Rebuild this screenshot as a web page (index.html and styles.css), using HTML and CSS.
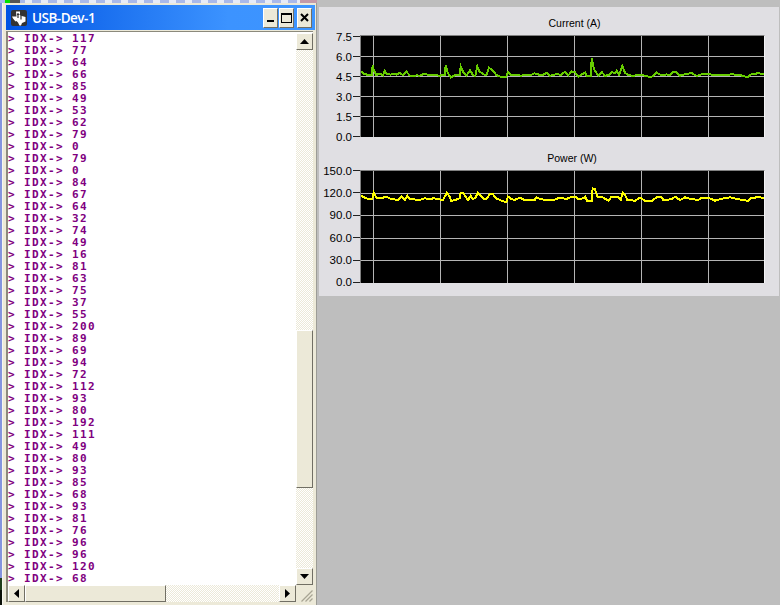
FILE: index.html
```html
<!DOCTYPE html>
<html lang="en">
<head>
<meta charset="utf-8">
<title>USB-Dev-1</title>
<link rel="stylesheet" href="styles.css">
</head>
<body>
<div class="desktop">
  <section class="left">
    <div class="strip"></div>
    <div class="window">
      <header class="titlebar">
        <svg class="logo" viewBox="0 0 16 16" aria-hidden="true">
          <rect width="16" height="16" rx="2" fill="#333"/>
          <path d="M5 1.500h4v4l5.500 1.500v4.500l-3.500 1.500-1 2.500h-1.500l-1.500-3-1.500-1.500-1 .5-2.500-3-1-2h4.500z" fill="#fff"/>
          <path d="M7 3v5M6 4.500h2.500M10 3v1M10 5.500v4" stroke="#333" stroke-width="1.200" fill="none"/>
        </svg>
        <span class="title">USB-Dev-1</span>
        <div class="controls">
          <button class="ctl ctl-min"><i></i></button>
          <button class="ctl ctl-max"><i></i></button>
          <button class="ctl ctl-close">
            <svg viewBox="0 0 9 9" width="9" height="9" aria-hidden="true"><path d="M1 1l7 7M8 1l-7 7" stroke="#000" stroke-width="2"/></svg>
          </button>
        </div>
      </header>
      <div class="client">
        <div class="upper">
          <div class="log">
            <div>&gt; IDX-&gt; 117</div>
            <div>&gt; IDX-&gt; 77</div>
            <div>&gt; IDX-&gt; 64</div>
            <div>&gt; IDX-&gt; 66</div>
            <div>&gt; IDX-&gt; 85</div>
            <div>&gt; IDX-&gt; 49</div>
            <div>&gt; IDX-&gt; 53</div>
            <div>&gt; IDX-&gt; 62</div>
            <div>&gt; IDX-&gt; 79</div>
            <div>&gt; IDX-&gt; 0</div>
            <div>&gt; IDX-&gt; 79</div>
            <div>&gt; IDX-&gt; 0</div>
            <div>&gt; IDX-&gt; 84</div>
            <div>&gt; IDX-&gt; 67</div>
            <div>&gt; IDX-&gt; 64</div>
            <div>&gt; IDX-&gt; 32</div>
            <div>&gt; IDX-&gt; 74</div>
            <div>&gt; IDX-&gt; 49</div>
            <div>&gt; IDX-&gt; 16</div>
            <div>&gt; IDX-&gt; 81</div>
            <div>&gt; IDX-&gt; 63</div>
            <div>&gt; IDX-&gt; 75</div>
            <div>&gt; IDX-&gt; 37</div>
            <div>&gt; IDX-&gt; 55</div>
            <div>&gt; IDX-&gt; 200</div>
            <div>&gt; IDX-&gt; 89</div>
            <div>&gt; IDX-&gt; 69</div>
            <div>&gt; IDX-&gt; 94</div>
            <div>&gt; IDX-&gt; 72</div>
            <div>&gt; IDX-&gt; 112</div>
            <div>&gt; IDX-&gt; 93</div>
            <div>&gt; IDX-&gt; 80</div>
            <div>&gt; IDX-&gt; 192</div>
            <div>&gt; IDX-&gt; 111</div>
            <div>&gt; IDX-&gt; 49</div>
            <div>&gt; IDX-&gt; 80</div>
            <div>&gt; IDX-&gt; 93</div>
            <div>&gt; IDX-&gt; 85</div>
            <div>&gt; IDX-&gt; 68</div>
            <div>&gt; IDX-&gt; 93</div>
            <div>&gt; IDX-&gt; 81</div>
            <div>&gt; IDX-&gt; 76</div>
            <div>&gt; IDX-&gt; 96</div>
            <div>&gt; IDX-&gt; 96</div>
            <div>&gt; IDX-&gt; 120</div>
            <div>&gt; IDX-&gt; 68</div>
          </div>
          <div class="vscroll">
            <div class="sbtn"><i class="arrow arrow-up"></i></div>
            <div class="vtrack"><div class="vthumb"></div></div>
            <div class="sbtn"><i class="arrow arrow-down"></i></div>
          </div>
        </div>
        <div class="hscroll">
          <div class="sbtn sbtn-h"><i class="arrow arrow-left"></i></div>
          <div class="htrack"><div class="hthumb"></div></div>
          <div class="sbtn sbtn-h"><i class="arrow arrow-right"></i></div>
          <svg class="grip" viewBox="0 0 17 17" aria-hidden="true">
            <path d="M5.500 16.500l11-11M9.500 16.500l7-7M13.500 16.500l3-3" stroke="#a8a594" stroke-width="1.300" fill="none"/>
          </svg>
        </div>
      </div>
    </div>
  </section>

  <main class="workspace">
    <div class="panel">
      <div class="chart">
        <h2 class="chart-title chart-title-current">Current (A)</h2>
        <div class="chart-body chart-body-current">
          <div class="axis axis-current">
            <div class="tick"><span>7.5</span></div>
            <div class="tick"><span>6.0</span></div>
            <div class="tick"><span>4.5</span></div>
            <div class="tick"><span>3.0</span></div>
            <div class="tick"><span>1.5</span></div>
            <div class="tick"><span>0.0</span></div>
          </div>
          <svg class="plot" viewBox="361 36 403 101" preserveAspectRatio="none" aria-hidden="true">
            <g class="grid">
              <path d="M361 56.500H764M361 76.500H764M361 96.500H764M361 116.500H764"/>
              <path d="M373.500 36V137M440.500 36V137M507.500 36V137M574.500 36V137M641.500 36V137M708.500 36V137"/>
            </g>
            <polyline class="trace trace-current" transform="translate(318 0) scale(.33333)" points="130,212 134,219 140,222 150,225 162,225 164,196 168,212 175,225 185,221 195,226 200,212 207,222 218,224 225,221 235,224 245,218 255,226 265,215 275,226 285,229 295,226 305,227 320,221 330,225 340,224 352,226 365,227 380,224 383,197 390,220 398,232 410,226 425,226 428,199 435,215 445,227 456,211 465,225 472,228 478,199 485,215 495,222 505,226 513,203 525,212 535,225 550,231 565,230 570,217 580,226 595,224 608,227 620,225 635,226 650,220 666,225"/>
            <polyline class="trace trace-current" transform="translate(540 0) scale(.33333)" points="0,226 10,224 20,218 30,227 40,225 50,222 62,225 75,215 85,226 95,214 105,217 115,230 125,223 135,218 140,228 153,228 155,175 160,200 165,213 175,227 185,216 195,227 205,226 215,216 225,220 230,212 237,225 247,198 255,218 265,226 280,227 300,225 315,227 333,232 350,218 365,226 380,223 390,226 400,215 410,217 420,227 435,223 455,219 470,228 485,223 500,222 525,225 550,225 575,223 600,225 622,232 635,222 655,220 672,222"/>
          </svg>
        </div>
      </div>
      <div class="chart">
        <h2 class="chart-title chart-title-power">Power (W)</h2>
        <div class="chart-body chart-body-power">
          <div class="axis axis-power">
            <div class="tick"><span>150.0</span></div>
            <div class="tick"><span>120.0</span></div>
            <div class="tick"><span>90.0</span></div>
            <div class="tick"><span>60.0</span></div>
            <div class="tick"><span>30.0</span></div>
            <div class="tick"><span>0.0</span></div>
          </div>
          <svg class="plot" viewBox="361 171 403 112" preserveAspectRatio="none" aria-hidden="true">
            <g class="grid">
              <path d="M361 193.500H764M361 215.500H764M361 238.500H764M361 260.500H764"/>
              <path d="M373.500 171V283M440.500 171V283M507.500 171V283M574.500 171V283M641.500 171V283M708.500 171V283"/>
            </g>
            <polyline class="trace trace-power" transform="translate(318 145) scale(.33333)" points="130,152 140,158 150,162 163,162 167,143 175,158 195,158 205,155 220,162 240,165 250,155 260,165 268,152 275,162 305,165 320,160 340,163 345,158 355,162 375,165 387,143 395,155 400,168 412,165 425,160 428,143 435,143 445,158 450,165 458,153 465,162 472,158 480,143 495,160 505,163 515,148 525,148 535,160 550,167 565,172 570,155 580,162 590,165 605,158 620,165 650,165 655,157 666,162"/>
            <polyline class="trace trace-power" transform="translate(540 145) scale(.33333)" points="0,162 20,165 40,165 60,158 80,162 95,155 105,155 115,162 130,160 135,155 142,168 155,168 158,130 165,132 172,155 185,155 205,167 215,155 235,157 242,165 248,143 255,150 262,165 285,167 300,158 315,167 335,168 350,157 365,157 370,165 395,163 405,155 420,165 435,157 445,160 475,165 485,158 505,158 525,167 550,160 570,157 590,162 610,165 625,168 635,158 660,157 672,160"/>
          </svg>
        </div>
      </div>
    </div>
  </main>
</div>
</body>
</html>
```
FILE: styles.css
```css
* {
  box-sizing: border-box;
}

html,
body {
  margin: 0;
  padding: 0;
  height: 100%;
  overflow: hidden;
}

.desktop {
  display: flex;
  width: 780px;
  height: 605px;
  background: #bebebe;
  font-family: "Liberation Sans", Arial, sans-serif;
}

/* Left side: the terminal window on the desktop */
.left {
  width: 317px;
  flex: none;
  display: flex;
  flex-direction: column;
  background: linear-gradient(#8494de 0 578px, #1f3d1a 578px 590px, #0a0f08 590px);
}

.strip {
  height: 3px;
  flex: none;
  background:
    linear-gradient(90deg, transparent 5px, #00e000 5px 10px, #555 10px 20px, transparent 20px 300px, #c49aa8 300px),
    repeating-linear-gradient(90deg, #a9b9ea 0 9px, #e6ebf8 9px 16px);
}

.window {
  flex: 1;
  margin-left: 2px;
  padding: 2px 1px 3px 3px;
  display: flex;
  flex-direction: column;
  background: #ece9d8;
  border-left: 1px solid #f6f5ee;
  border-right: 1px solid #9c9c96;
}

.titlebar {
  height: 25px;
  flex: none;
  display: flex;
  align-items: center;
  padding: 0 3px 0 5px;
  background: linear-gradient(90deg, #0054e3, #3c93ff 72%, #3d95ff);
}

.logo {
  width: 16px;
  height: 16px;
  flex: none;
}

.title {
  margin-left: 5px;
  color: #fff;
  font-family: "Open Sans", "Liberation Sans", sans-serif;
  font-size: 13.500px;
  font-weight: 600;
  letter-spacing: -0.5px;
  line-height: 16px;
}

.controls {
  margin-left: auto;
  display: flex;
}

.ctl {
  width: 15px;
  height: 20px;
  margin: 0 0 0 1px;
  padding: 0;
  display: flex;
  align-items: center;
  justify-content: center;
  background: #ece9d8;
  border: 1px solid;
  border-color: #fff #716f64 #716f64 #fff;
}

.ctl-close {
  margin-left: 3px;
}

.ctl-min i {
  display: block;
  width: 7px;
  height: 2px;
  margin-top: 7px;
  background: #000;
}

.ctl-max i {
  display: block;
  width: 11px;
  height: 10px;
  border: 1px solid #000;
  border-top-width: 2px;
}

.client {
  flex: none;
  height: 571px;
  margin-top: 1px;
  margin-right: 2px;
  display: flex;
  flex-direction: column;
  background: #fff;
  border-left: 2px solid #8c8a7c;
  border-top: 1px solid #8c8a7c;
}

.upper {
  flex: none;
  height: 553px;
  display: flex;
}

.log {
  flex: 1;
  overflow: hidden;
  padding-top: 1px;
  font-family: "DejaVu Sans Mono", "Liberation Mono", monospace;
  font-size: 11px;
  font-weight: 700;
  letter-spacing: 1.380px;
  line-height: 12px;
  color: #800080;
}

.log div {
  height: 12px;
}

.vscroll {
  width: 17px;
  flex: none;
  padding-top: 1px;
  display: flex;
  flex-direction: column;
}

.sbtn {
  height: 17px;
  flex: none;
  display: flex;
  align-items: center;
  justify-content: center;
  background: #ece9d8;
  border: 1px solid;
  border-color: #fff #716f64 #716f64 #fff;
}

.sbtn-h {
  width: 17px;
  height: 17px;
}

.arrow {
  display: block;
  background: #000;
}

.arrow-up,
.arrow-down {
  width: 9px;
  height: 5px;
}

.arrow-left,
.arrow-right {
  width: 5px;
  height: 9px;
}

.arrow-up {
  clip-path: polygon(50% 0, 100% 100%, 0 100%);
}

.arrow-down {
  clip-path: polygon(0 0, 100% 0, 50% 100%);
}

.arrow-left {
  clip-path: polygon(100% 0, 100% 100%, 0 50%);
}

.arrow-right {
  clip-path: polygon(0 0, 100% 50%, 0 100%);
}

.vtrack,
.htrack {
  flex: 1;
  min-width: 0;
  background: repeating-conic-gradient(#ece9d8 0 25%, #fff 0 50%) 0 0 / 2px 2px;
}

.vthumb {
  width: 17px;
  height: 158px;
  margin-top: 280px;
  background: #ece9d8;
  border: 1px solid;
  border-color: #fff #716f64 #716f64 #fff;
}

.hscroll {
  height: 17px;
  flex: none;
  display: flex;
  background: #ece9d8;
}

.hthumb {
  width: 141px;
  height: 17px;
  background: #ece9d8;
  border: 1px solid;
  border-color: #fff #716f64 #716f64 #fff;
}

.grip {
  width: 17px;
  height: 17px;
  flex: none;
}

/* Right side: the plots */
.workspace {
  flex: 1;
  padding: 7px 1px 0 2px;
}

.panel {
  height: 289px;
  padding-top: 9px;
  background: #e0dfe3;
}

.chart + .chart {
  margin-top: 14px;
}

.chart-title {
  margin: 0 0 5px;
  height: 14px;
  font-size: 10.500px;
  font-weight: 400;
  line-height: 14px;
  text-align: center;
  color: #000;
}

.chart-title-current {
  padding-left: 51px;
}

.chart-title-power {
  padding-left: 46px;
}

.chart-body {
  display: flex;
}

.chart-body-current {
  height: 102px;
}

.chart-body-power {
  height: 113px;
}

.axis {
  width: 41px;
  flex: none;
  display: flex;
  flex-direction: column;
  justify-content: space-between;
}

.axis-current {
  padding-top: 1px;
}

.tick {
  height: 1px;
  display: flex;
  align-items: center;
  justify-content: flex-end;
  font-size: 11.500px;
  line-height: 12px;
  color: #000;
}

.tick::after {
  content: "";
  flex: none;
  width: 7px;
  height: 1px;
  margin-left: 1px;
  background: #222;
}

.plot {
  display: block;
  width: 405px;
  height: 100%;
  background: #000;
  border-top: 1px solid #808080;
  border-left: 1px solid #808080;
  border-right: 1px solid #f4f4f6;
}

.grid path {
  fill: none;
  stroke: #b4b4b4;
  stroke-width: 1;
  shape-rendering: crispEdges;
}

.trace {
  fill: none;
  stroke-width: 2;
  stroke-linejoin: miter;
  vector-effect: non-scaling-stroke;
  shape-rendering: crispEdges;
}

.trace-current {
  stroke: #66cc00;
}

.trace-power {
  stroke: #ffff00;
}
```
